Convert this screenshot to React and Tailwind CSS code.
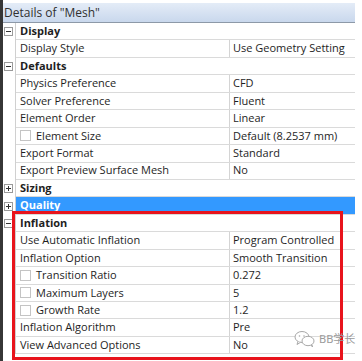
import React from "react";

const rows = [
  { cat: true, label: "Display", sign: "-" },
  { label: "Display Style", value: "Use Geometry Setting" },
  { cat: true, label: "Defaults", sign: "-" },
  { label: "Physics Preference", value: "CFD" },
  { label: "Solver Preference", value: "Fluent" },
  { label: "Element Order", value: "Linear" },
  { label: "Element Size", value: "Default (8.2537 mm)", check: true },
  { label: "Export Format", value: "Standard" },
  { label: "Export Preview Surface Mesh", value: "No" },
  { cat: true, label: "Sizing", sign: "+" },
  { cat: true, label: "Quality", sign: "+", selected: true },
  { cat: true, label: "Inflation", sign: "-" },
  { label: "Use Automatic Inflation", value: "Program Controlled" },
  { label: "Inflation Option", value: "Smooth Transition" },
  { label: "Transition Ratio", value: "0.272", check: true },
  { label: "Maximum Layers", value: "5", check: true },
  { label: "Growth Rate", value: "1.2", check: true },
  { label: "Inflation Algorithm", value: "Pre" },
  { label: "View Advanced Options", value: "No" },
];

const SignBox = ({ sign }) => (
  <div className="relative w-[9px] h-[9px] border border-[#9a9a9a] bg-white">
    <div className="absolute left-[1px] right-[1px] top-[3px] h-[1px] bg-[#333]" />
    {sign === "+" && (
      <div className="absolute top-[1px] bottom-[1px] left-[3px] w-[1px] bg-[#333]" />
    )}
  </div>
);

const Row = ({ row }) => (
  <div className="flex h-[17.45px]">
    <div className="w-[13px] shrink-0 border-r border-[#d0d0d0] flex items-center justify-center pr-[1px]">
      {row.sign && <SignBox sign={row.sign} />}
    </div>
    <div
      className={`flex flex-1 border-b border-[#dadada] ${
        row.selected ? "bg-[#3399ff] text-white" : "text-[#1e1e1e]"
      }`}
    >
      {row.cat ? (
        <div className="pl-[4px] flex items-center font-bold">{row.label}</div>
      ) : (
        <>
          <div className="w-[214px] shrink-0 border-r border-[#d4d4d4] pl-[4px] flex items-center">
            {row.check && (
              <div className="w-[11px] h-[11px] border border-[#c4c4c4] bg-white mr-[5px]" />
            )}
            {row.label}
          </div>
          <div className="pl-[3px] flex items-center">{row.value}</div>
        </>
      )}
    </div>
  </div>
);

const App = () => {
  return (
    <div
      className="relative w-[362px] h-[361px] bg-white overflow-hidden flex text-[11px]"
      style={{ fontFamily: '"Open Sans", "Noto Sans", sans-serif' }}
    >
      {/* left window edge */}
      <div className="w-[3px] bg-[#363636] shrink-0" />

      <div className="w-[352px] pt-[3px]">
        {/* Header */}
        <div className="h-[20px] border-b border-[#8d99a8] bg-gradient-to-b from-[#e4ecf7] to-[#c9d8ed] flex items-center pl-[1px] text-[12px] text-[#303030]">
          Details of "Mesh"
        </div>

        {rows.map((row, i) => (
          <Row key={i} row={row} />
        ))}
      </div>

      {/* red highlight annotation */}
      <div className="absolute left-[12px] top-[211px] w-[331px] h-[149px] border-[3px] border-[#e8141c]" />

      {/* watermark */}
      <div className="absolute left-[294px] top-[330px] flex items-center gap-[3px] text-[#9a9a9a] text-[11px]">
        <svg width="22" height="18" viewBox="0 0 22 18" fill="none" stroke="#a8a8a8" strokeWidth="1">
          <ellipse cx="8" cy="7" rx="7" ry="5.5" fill="white" />
          <path d="M4 11.5 L3 14.5 L6.5 12.3" fill="white" />
          <ellipse cx="14" cy="11" rx="6" ry="4.7" fill="white" />
          <path d="M17 15 L18.5 17 L18 14.8" />
          <circle cx="5.5" cy="6" r="0.8" fill="#a8a8a8" stroke="none" />
          <circle cx="10" cy="6" r="0.8" fill="#a8a8a8" stroke="none" />
        </svg>
        <span style={{ fontFamily: '"Noto Sans", "Noto Sans CJK SC", sans-serif' }}>BB学长</span>
      </div>
    </div>
  );
};

export default App;
